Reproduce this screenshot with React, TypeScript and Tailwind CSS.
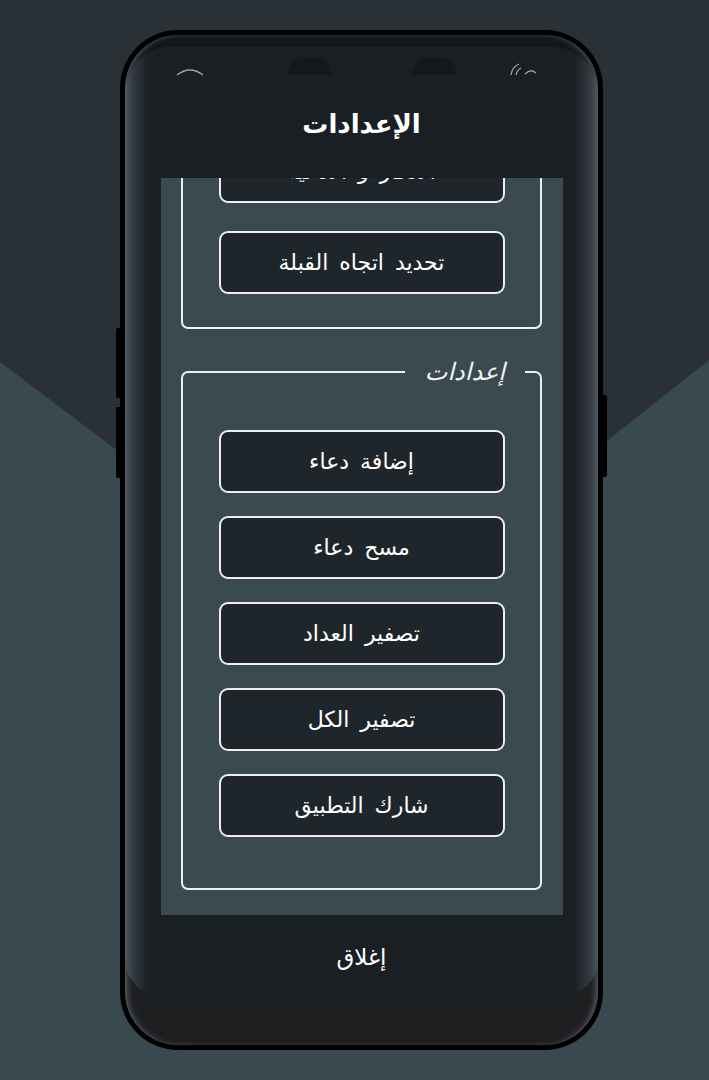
const arabic = "font-['DejaVu_Sans',sans-serif]";

const topItems = ["الأذكار و الأدعية", "تحديد اتجاه القبلة"];

const settingsItems = [
  "إضافة دعاء",
  "مسح دعاء",
  "تصفير العداد",
  "تصفير الكل",
  "شارك التطبيق"
];

function MenuButton({ label }: { label: string }) {
  return (
    <button
      className={`flex h-[63px] w-[286px] shrink-0 items-center justify-center rounded-[9px] border-2 border-[#eceeef] bg-[#1f262b] text-[22px] leading-none text-white [word-spacing:4px] ${arabic}`}
      type="button"
    >
      {label}
    </button>
  );
}

function StatusIcons() {
  return (
    <>
      <svg
        className="absolute top-[20px] left-[51px]"
        height="10"
        viewBox="0 0 28 10"
        width="28"
      >
        <path d="M1 8 Q14 -2 27 8" fill="none" stroke="#9ea3a7" strokeWidth="1.4" />
      </svg>
      <div className="absolute top-[11px] left-[163px] h-[17px] w-[44px] rounded-t-full bg-[#15181b]" />
      <div className="absolute top-[11px] left-[287px] h-[17px] w-[45px] rounded-t-full bg-[#15181b]" />
      <svg
        className="absolute top-[15px] left-[384px]"
        height="15"
        viewBox="0 0 30 15"
        width="30"
      >
        <path d="M2 13 Q3 5 10 2" fill="none" stroke="#9ea3a7" strokeWidth="1.3" />
        <path d="M7 13 Q8 8 12 6" fill="none" stroke="#9ea3a7" strokeWidth="1.3" />
        <path d="M16 12 Q22 6 27 11" fill="none" stroke="#9ea3a7" strokeWidth="1.3" />
      </svg>
    </>
  );
}

export default function App() {
  return (
    <div className="relative h-[1080px] w-[709px] overflow-hidden bg-[#394950]">
      <svg className="absolute inset-0" height="1080" viewBox="0 0 709 1080" width="709">
        <polygon fill="#293137" points="0,0 709,0 709,360 362,635 0,362" />
      </svg>

      {/* side keys */}
      <div className="absolute top-[328px] left-[116px] h-[70px] w-[6px] rounded-l-[2px] bg-black" />
      <div className="absolute top-[407px] left-[116px] h-[71px] w-[6px] rounded-l-[2px] bg-black" />
      <div className="absolute top-[395px] left-[601px] h-[82px] w-[6px] rounded-r-[2px] bg-black" />

      <div className="relative mt-[30px] ml-[120px] h-[1020px] w-[483px] rounded-[58px] bg-black p-[5px]">
        <div className="flex h-full flex-col overflow-hidden rounded-[53px] bg-[linear-gradient(to_bottom,#14171a_0%,#14171a_50%,#1e1f21_50%,#1e1f21_100%)] shadow-[inset_5px_0_6px_-3px_#5a636b,inset_-5px_0_6px_-3px_#5a636b]">
          <div className="mt-[12px] flex h-[950px] flex-col rounded-t-[46px] rounded-b-[38px] bg-[linear-gradient(to_right,#4f5860_0px,#323a40_8px,#1d2227_22px,#1a1f24_34px,#1a1f24_calc(100%_-_34px),#1d2227_calc(100%_-_22px),#323a40_calc(100%_-_8px),#4f5860_100%)]">
            <header className="relative h-[131px] shrink-0 pt-[58px] text-center">
              <StatusIcons />
              <h1 className={`text-[26px] leading-[38px] font-bold text-white ${arabic}`} dir="rtl">
                الإعدادات
              </h1>
            </header>

            <div className="ml-[36px] h-[737px] w-[402px] shrink-0 overflow-hidden bg-[#3b4a51]" dir="rtl">
              <div className="-mt-[80px] flex flex-col">
                <div className="mr-[21px] flex w-[361px] flex-col items-center gap-[28px] rounded-[7px] border-2 border-[#eceeef] pt-[40px] pb-[33px]">
                  {topItems.map((label) => (
                    <MenuButton key={label} label={label} />
                  ))}
                </div>

                <fieldset className="mt-[27px] mr-[21px] flex w-[361px] flex-col items-center gap-[23px] rounded-[7px] border-2 border-[#eceeef] pt-[42px] pb-[51px]">
                  <legend className={`mr-[15px] px-[20px] text-[24px] leading-[32px] text-[#f2f3f3] italic ${arabic}`}>
                    إعدادات
                  </legend>
                  {settingsItems.map((label) => (
                    <MenuButton key={label} label={label} />
                  ))}
                </fieldset>
              </div>
            </div>

            <footer className="flex flex-1 items-center justify-center pt-[2px]">
              <span className={`text-[23px] leading-none text-white ${arabic}`}>إغلاق</span>
            </footer>
          </div>
        </div>
      </div>
    </div>
  );
}
